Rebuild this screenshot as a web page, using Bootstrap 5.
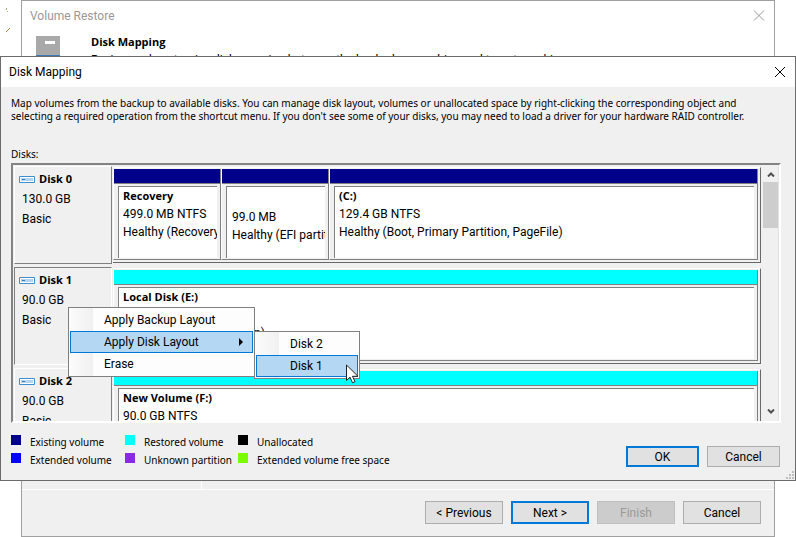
<!DOCTYPE html>
<html lang="en">
<head>
<meta charset="utf-8">
<meta name="viewport" content="width=device-width, initial-scale=1">
<title>Volume Restore - Disk Mapping</title>
<link href="https://cdn.jsdelivr.net/npm/bootstrap@5.3.0/dist/css/bootstrap.min.css" rel="stylesheet">
<style>
  body { font-family: Roboto, "Liberation Sans", sans-serif; font-size: 12px; line-height: 18px; color: #000; background: #fff; }
  h1, h2, h3, p { font-size: 12px; line-height: 18px; margin: 0; font-weight: 400; }
  .heading-bold { font: 700 11px/18px "Open Sans", "Noto Sans", sans-serif; }
  .plain-btn { background: none; border: 0; padding: 0; line-height: 0; }
  .specks { left: 5px; top: 8px; }

  /* wizard window */
  .wizard { margin: 0 21px; min-height: 100vh; border: 1px solid #a0a0a0; }
  .wizard-title { color: #999; padding: 6px 9px 0 8px; }
  .wizard-head { padding: 8px 14px 0; gap: 31px; }
  .wizard-icon { margin-top: 3px; }
  .wizard-body { background: linear-gradient(#fff 60px, #f0f0f0 60px); }
  .wizard-nav { width: 180px; border-right: 1px solid #fff; }
  .wizard-foot { background: #f0f0f0; border-top: 1px solid #fff; padding: 11px 13px 12px; gap: 8px; }
  .win-btn { border: 1px solid #adadad; border-radius: 0; background: #e1e1e1; color: #000; font-size: 12px; line-height: 18px; padding: 0; width: 78px; height: 23px; }
  .win-btn.default-btn { border: 2px solid #0078d7; }
  .win-btn:disabled { background: #ccc; border-color: #bfbfbf; color: #9a9a9a; opacity: 1; }
  .win-btn.dialog-btn { width: 73px; height: 21px; line-height: 16px; }

  /* mapping dialog */
  .mapping { left: 0; right: 0; top: 56px; border: 1px solid #6b6b6b; background: #f0f0f0; }
  .mapping-title { background: #fff; height: 30px; padding: 0 9px 0 8px; }
  .mapping-body { padding: 10px 14px 11px 10px; font-family: "Noto Sans", "Open Sans", sans-serif; }
  .mapping-body .note, .mapping-body .list-label { font-size: 10px; line-height: 13px; }
  .mapping-body .list-label { margin: 25px 0 2px; }
  .disk-list { height: 260px; border: 2px solid; border-color: #838383 #fff #fff #838383; font-family: Roboto, "Liberation Sans", sans-serif; }
  .disk-rows { gap: 3px; padding: 1px 2px 0 1px; }
  .disk-row { height: 98px; gap: 1px; }
  .disk-info { width: 98px; border: 1px solid; border-color: #fff #808080 #808080 #fff; padding: 2px 0 0 7px; line-height: 20px; }
  .disk-info.chosen { border-color: #808080 #fff #fff #808080; }
  .disk-info .heading-bold { line-height: 20px; }
  .disk-info svg { margin: 1px 4px 0 -3px; }
  .disk-map { margin: 1px 0; border: 1px solid; border-color: #fff #696969 #696969 #fff; border-left: 0; padding: 1px 2px 2px 0; }
  .vol { border: 1px solid; border-color: #fff #808080 #808080 #fff; border-top: 0; min-width: 0; }
  .vol-recovery, .vol-efi { flex: 0 0 108px; }
  .vol-bar { height: 15px; border-bottom: 1px solid #808080; }
  .vol-text { margin: 2px 3px 1px 4px; background: #fff; border: 1px solid #808080; border-right: 0; border-bottom: 0; padding-left: 4px; white-space: nowrap; }
  .vol-text.untitled { padding: 21px 0 0 5px; }
  .c-existing { background: #00008b; }
  .c-restored { background: #0ff; }
  .c-none { background: #000; }
  .c-extended { background: #00f; }
  .c-unknown { background: #8a2be2; }
  .c-free { background: #7cfc00; }
  .scroll-col { width: 16px; border-right: 1px solid #e3e3e3; padding: 7px 0; }
  .scroll-thumb { width: 15px; height: 46px; margin-top: 5px; background: #cdcdcd; }

  .legend-grid { display: grid; grid-template-columns: 114px 113px auto; font-size: 10px; line-height: 18px; }
  .swatch { width: 10px; height: 10px; margin-bottom: 4px; }
  .legend-grid li { gap: 9px; }
  .mapping-foot { margin-top: 10px; padding-right: 1px; }
  .dialog-actions { gap: 8px; margin-top: 13px; font-family: Roboto, sans-serif; }
  .grip { right: 1px; bottom: 1px; line-height: 0; }

  /* shortcut menus */
  .shortcut { border: 1px solid #808080; padding: 1px; background: linear-gradient(to right, #fcfcfc, #f0f0f0 24px, #fdfdfd 24px); }
  .shortcut-main { left: 67px; top: 250px; width: 187px; }
  .shortcut-sub { left: 253px; top: 274px; width: 106px; }
  .shortcut button { display: flex; align-items: center; justify-content: space-between; width: 100%; height: 22px; padding: 0 8px 0 33px; border: 1px solid transparent; background: none; color: #000; line-height: 20px; }
  .shortcut button.picked { background: #b4d7f3; border-color: #0078d7; }
  .pointer { left: 345px; top: 307px; line-height: 0; }
</style>
</head>
<body>
<div class="position-relative">
  <svg class="specks position-absolute" width="6" height="26" aria-hidden="true">
    <path d="M1 0h1v2H1zM2 3h1v1H2z" fill="#b5b56a"/><path d="M1 24l4-4" stroke="#b08a3c" fill="none"/>
  </svg>

  <section class="wizard d-flex flex-column">
    <header class="wizard-title d-flex justify-content-between align-items-start">
      <h1>Volume Restore</h1>
      <button class="plain-btn" type="button" aria-label="Close wizard">
        <svg width="12" height="16"><path d="M1 3.500l10 10M11 3.500l-10 10" stroke="#999" fill="none"/></svg>
      </button>
    </header>
    <div class="wizard-head d-flex align-items-start">
      <svg class="wizard-icon" width="24" height="28" aria-hidden="true">
        <path d="M0 0h24v28H0z" fill="#a9a9a9"/><path d="M9 5h10v3H9z" fill="#fff"/><path d="M0 19h24v9H0z" fill="#3d7ab8"/>
      </svg>
      <div>
        <h2 class="heading-bold">Disk Mapping</h2>
        <p>Review and customize disk mapping between the backed up machine and target machine.</p>
      </div>
    </div>
    <div class="wizard-body flex-fill d-flex"><div class="wizard-nav"></div></div>
    <footer class="wizard-foot d-flex justify-content-end">
      <button class="btn win-btn" type="button">&lt; Previous</button>
      <button class="btn win-btn default-btn" type="button">Next &gt;</button>
      <button class="btn win-btn" type="button" disabled>Finish</button>
      <button class="btn win-btn" type="button">Cancel</button>
    </footer>
  </section>

  <section class="mapping position-absolute" role="dialog" aria-labelledby="mapTitle">
    <header class="mapping-title d-flex justify-content-between align-items-center">
      <h2 id="mapTitle">Disk Mapping</h2>
      <button class="plain-btn" type="button" aria-label="Close">
        <svg width="12" height="12"><path d="M1 1l10 10M11 1L1 11" stroke="#000" fill="none"/></svg>
      </button>
    </header>
    <div class="mapping-body">
      <p class="note">Map volumes from the backup to available disks. You can manage disk layout, volumes or unallocated space by right-clicking the corresponding object and<br>selecting a required operation from the shortcut menu. If you don't see some of your disks, you may need to load a driver for your hardware RAID controller.</p>
      <p class="list-label">Disks:</p>

      <div class="disk-list d-flex">
        <div class="disk-rows flex-fill d-flex flex-column overflow-hidden">
          <div class="disk-row d-flex flex-shrink-0">
            <div class="disk-info">
              <h3 class="heading-bold d-flex align-items-center"><svg width="16" height="7"><path d="M.5.500h15v6H.5z" fill="#fff" stroke="#3f8fd0"/><path d="M2 2h12v3H2z" fill="#b4d3ee"/><path d="M3 3h3v1H3z" fill="#2f7fc4"/></svg>Disk 0</h3>
              <div>130.0 GB</div><div>Basic</div>
            </div>
            <div class="disk-map flex-fill d-flex">
              <div class="vol vol-recovery d-flex flex-column">
                <div class="vol-bar c-existing"></div>
                <div class="vol-text flex-fill overflow-hidden"><div class="heading-bold">Recovery</div><div>499.0 MB NTFS</div><div>Healthy (Recovery Partition)</div></div>
              </div>
              <div class="vol vol-efi d-flex flex-column">
                <div class="vol-bar c-existing"></div>
                <div class="vol-text untitled flex-fill overflow-hidden"><div>99.0 MB</div><div>Healthy (EFI partition)</div></div>
              </div>
              <div class="vol flex-fill d-flex flex-column">
                <div class="vol-bar c-existing"></div>
                <div class="vol-text flex-fill overflow-hidden"><div class="heading-bold">(C:)</div><div>129.4 GB NTFS</div><div>Healthy (Boot, Primary Partition, PageFile)</div></div>
              </div>
            </div>
          </div>
          <div class="disk-row d-flex flex-shrink-0">
            <div class="disk-info chosen">
              <h3 class="heading-bold d-flex align-items-center"><svg width="16" height="7"><path d="M.5.500h15v6H.5z" fill="#fff" stroke="#3f8fd0"/><path d="M2 2h12v3H2z" fill="#b4d3ee"/><path d="M3 3h3v1H3z" fill="#2f7fc4"/></svg>Disk 1</h3>
              <div>90.0 GB</div><div>Basic</div>
            </div>
            <div class="disk-map flex-fill d-flex">
              <div class="vol flex-fill d-flex flex-column">
                <div class="vol-bar c-restored"></div>
                <div class="vol-text flex-fill overflow-hidden"><div class="heading-bold">Local Disk (E:)</div><div>90.0 GB NTFS</div><div>Healthy (Primary Partition)</div></div>
              </div>
            </div>
          </div>
          <div class="disk-row d-flex flex-shrink-0">
            <div class="disk-info">
              <h3 class="heading-bold d-flex align-items-center"><svg width="16" height="7"><path d="M.5.500h15v6H.5z" fill="#fff" stroke="#3f8fd0"/><path d="M2 2h12v3H2z" fill="#b4d3ee"/><path d="M3 3h3v1H3z" fill="#2f7fc4"/></svg>Disk 2</h3>
              <div>90.0 GB</div><div>Basic</div>
            </div>
            <div class="disk-map flex-fill d-flex">
              <div class="vol flex-fill d-flex flex-column">
                <div class="vol-bar c-restored"></div>
                <div class="vol-text flex-fill overflow-hidden"><div class="heading-bold">New Volume (F:)</div><div>90.0 GB NTFS</div></div>
              </div>
            </div>
          </div>
        </div>
        <div class="scroll-col flex-shrink-0 d-flex flex-column align-items-center" aria-hidden="true">
          <svg class="flex-shrink-0" width="8" height="5"><path d="M1 4.500l3-3 3 3" stroke="#505050" stroke-width="2" fill="none"/></svg>
          <div class="scroll-thumb"></div>
          <svg class="mt-auto flex-shrink-0" width="8" height="5"><path d="M1 .5l3 3 3-3" stroke="#505050" stroke-width="2" fill="none"/></svg>
        </div>
      </div>

      <footer class="mapping-foot d-flex justify-content-between align-items-start">
        <ul class="legend-grid list-unstyled mb-0">
          <li class="d-flex align-items-center"><span class="swatch c-existing"></span>Existing volume</li>
          <li class="d-flex align-items-center"><span class="swatch c-restored"></span>Restored volume</li>
          <li class="d-flex align-items-center"><span class="swatch c-none"></span>Unallocated</li>
          <li class="d-flex align-items-center"><span class="swatch c-extended"></span>Extended volume</li>
          <li class="d-flex align-items-center"><span class="swatch c-unknown"></span>Unknown partition</li>
          <li class="d-flex align-items-center"><span class="swatch c-free"></span>Extended volume free space</li>
        </ul>
        <div class="dialog-actions d-flex">
          <button class="btn win-btn dialog-btn default-btn" type="button">OK</button>
          <button class="btn win-btn dialog-btn" type="button">Cancel</button>
        </div>
      </footer>
    </div>

    <div class="grip position-absolute" aria-hidden="true"><svg width="8" height="8"><path d="M6 0h2v2H6zM6 3h2v2H6zM3 3h2v2H3zM6 6h2v2H6zM3 6h2v2H3zM0 6h2v2H0z" fill="#bfbfbf"/></svg></div>

    <div class="shortcut shortcut-main position-absolute" role="menu">
      <button type="button" role="menuitem">Apply Backup Layout</button>
      <button type="button" role="menuitem" class="picked">Apply Disk Layout <svg width="6" height="8" aria-hidden="true"><path d="M1 0l4 4-4 4z"/></svg></button>
      <button type="button" role="menuitem">Erase</button>
    </div>
    <div class="shortcut shortcut-sub position-absolute" role="menu">
      <button type="button" role="menuitem">Disk 2</button>
      <button type="button" role="menuitem" class="picked">Disk 1</button>
    </div>
    <div class="pointer position-absolute" aria-hidden="true">
      <svg width="13" height="20"><path d="M.5 1v15.500l3.500-3.300 2.500 5.600 2.500-1.100-2.500-5.400H12z" fill="#fff" stroke="#222"/></svg>
    </div>
  </section>
</div>
<script src="https://cdn.jsdelivr.net/npm/bootstrap@5.3.0/dist/js/bootstrap.bundle.min.js"></script>
</body>
</html>
